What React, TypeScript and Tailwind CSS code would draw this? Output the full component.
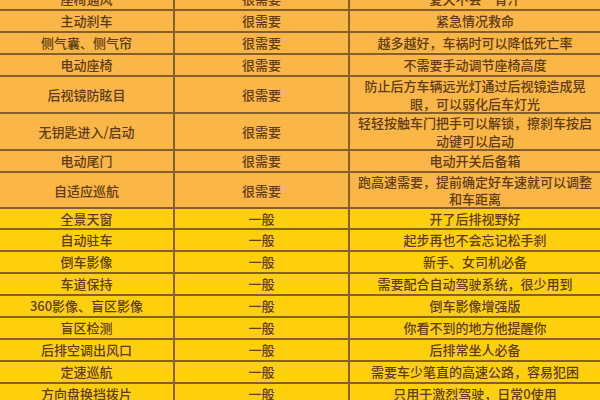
const rows: { name: string; level: string; note: string[]; h: string; tone: "orange" | "yellow" }[] = [
  { name: "座椅通风", level: "很需要", note: ["夏天不会一背汗"], h: "h-[22px]", tone: "orange" },
  { name: "主动刹车", level: "很需要", note: ["紧急情况救命"], h: "h-[22px]", tone: "orange" },
  { name: "侧气囊、侧气帘", level: "很需要", note: ["越多越好，车祸时可以降低死亡率"], h: "h-[22px]", tone: "orange" },
  { name: "电动座椅", level: "很需要", note: ["不需要手动调节座椅高度"], h: "h-[22px]", tone: "orange" },
  { name: "后视镜防眩目", level: "很需要", note: ["防止后方车辆远光灯通过后视镜造成晃", "眼，可以弱化后车灯光"], h: "h-[37px]", tone: "orange" },
  { name: "无钥匙进入/启动", level: "很需要", note: ["轻轻按触车门把手可以解锁，擦刹车按启", "动键可以启动"], h: "h-[37px]", tone: "orange" },
  { name: "电动尾门", level: "很需要", note: ["电动开关后备箱"], h: "h-[22px]", tone: "orange" },
  { name: "自适应巡航", level: "很需要", note: ["跑高速需要，提前确定好车速就可以调整", "和车距离"], h: "h-[36px] leading-[17px]", tone: "orange" },
  { name: "全景天窗", level: "一般", note: ["开了后排视野好"], h: "h-[21px]", tone: "yellow" },
  { name: "自动驻车", level: "一般", note: ["起步再也不会忘记松手刹"], h: "h-[22px]", tone: "yellow" },
  { name: "倒车影像", level: "一般", note: ["新手、女司机必备"], h: "h-[22px]", tone: "yellow" },
  { name: "车道保持", level: "一般", note: ["需要配合自动驾驶系统，很少用到"], h: "h-[22px]", tone: "yellow" },
  { name: "360影像、盲区影像", level: "一般", note: ["倒车影像增强版"], h: "h-[22px]", tone: "yellow" },
  { name: "盲区检测", level: "一般", note: ["你看不到的地方他提醒你"], h: "h-[22px]", tone: "yellow" },
  { name: "后排空调出风口", level: "一般", note: ["后排常坐人必备"], h: "h-[22px]", tone: "yellow" },
  { name: "定速巡航", level: "一般", note: ["需要车少笔直的高速公路，容易犯困"], h: "h-[22px]", tone: "yellow" },
  { name: "方向盘换挡拨片", level: "一般", note: ["只用于激烈驾驶，日常0使用"], h: "h-[22px]", tone: "yellow" },
];

export default function App() {
  return (
    <div
      className="w-[600px] h-[400px] overflow-hidden bg-[#fab646] text-[13px] leading-[18px] font-medium text-[#5e3c12]"
      style={{ fontFamily: '"Noto Sans CJK SC", "Noto Sans", sans-serif' }}
    >
      <div className="-mt-[11px] flex flex-col">
        {rows.map((r) => (
          <div
            key={r.name}
            className={`grid grid-cols-[175px_175px_250px] border-b-2 border-[#86602a] ${r.h} ${
              r.tone === "orange" ? "bg-[#fab646]" : "bg-[#fecf0c]"
            }`}
          >
            <div className="flex items-center justify-center border-r-2 border-[#86602a]">{r.name}</div>
            <div className="flex items-center justify-center border-r-2 border-[#86602a]">{r.level}</div>
            <div className="flex flex-col items-center justify-center text-center">
              {r.note.map((line) => (
                <span key={line}>{line}</span>
              ))}
            </div>
          </div>
        ))}
      </div>
    </div>
  );
}
